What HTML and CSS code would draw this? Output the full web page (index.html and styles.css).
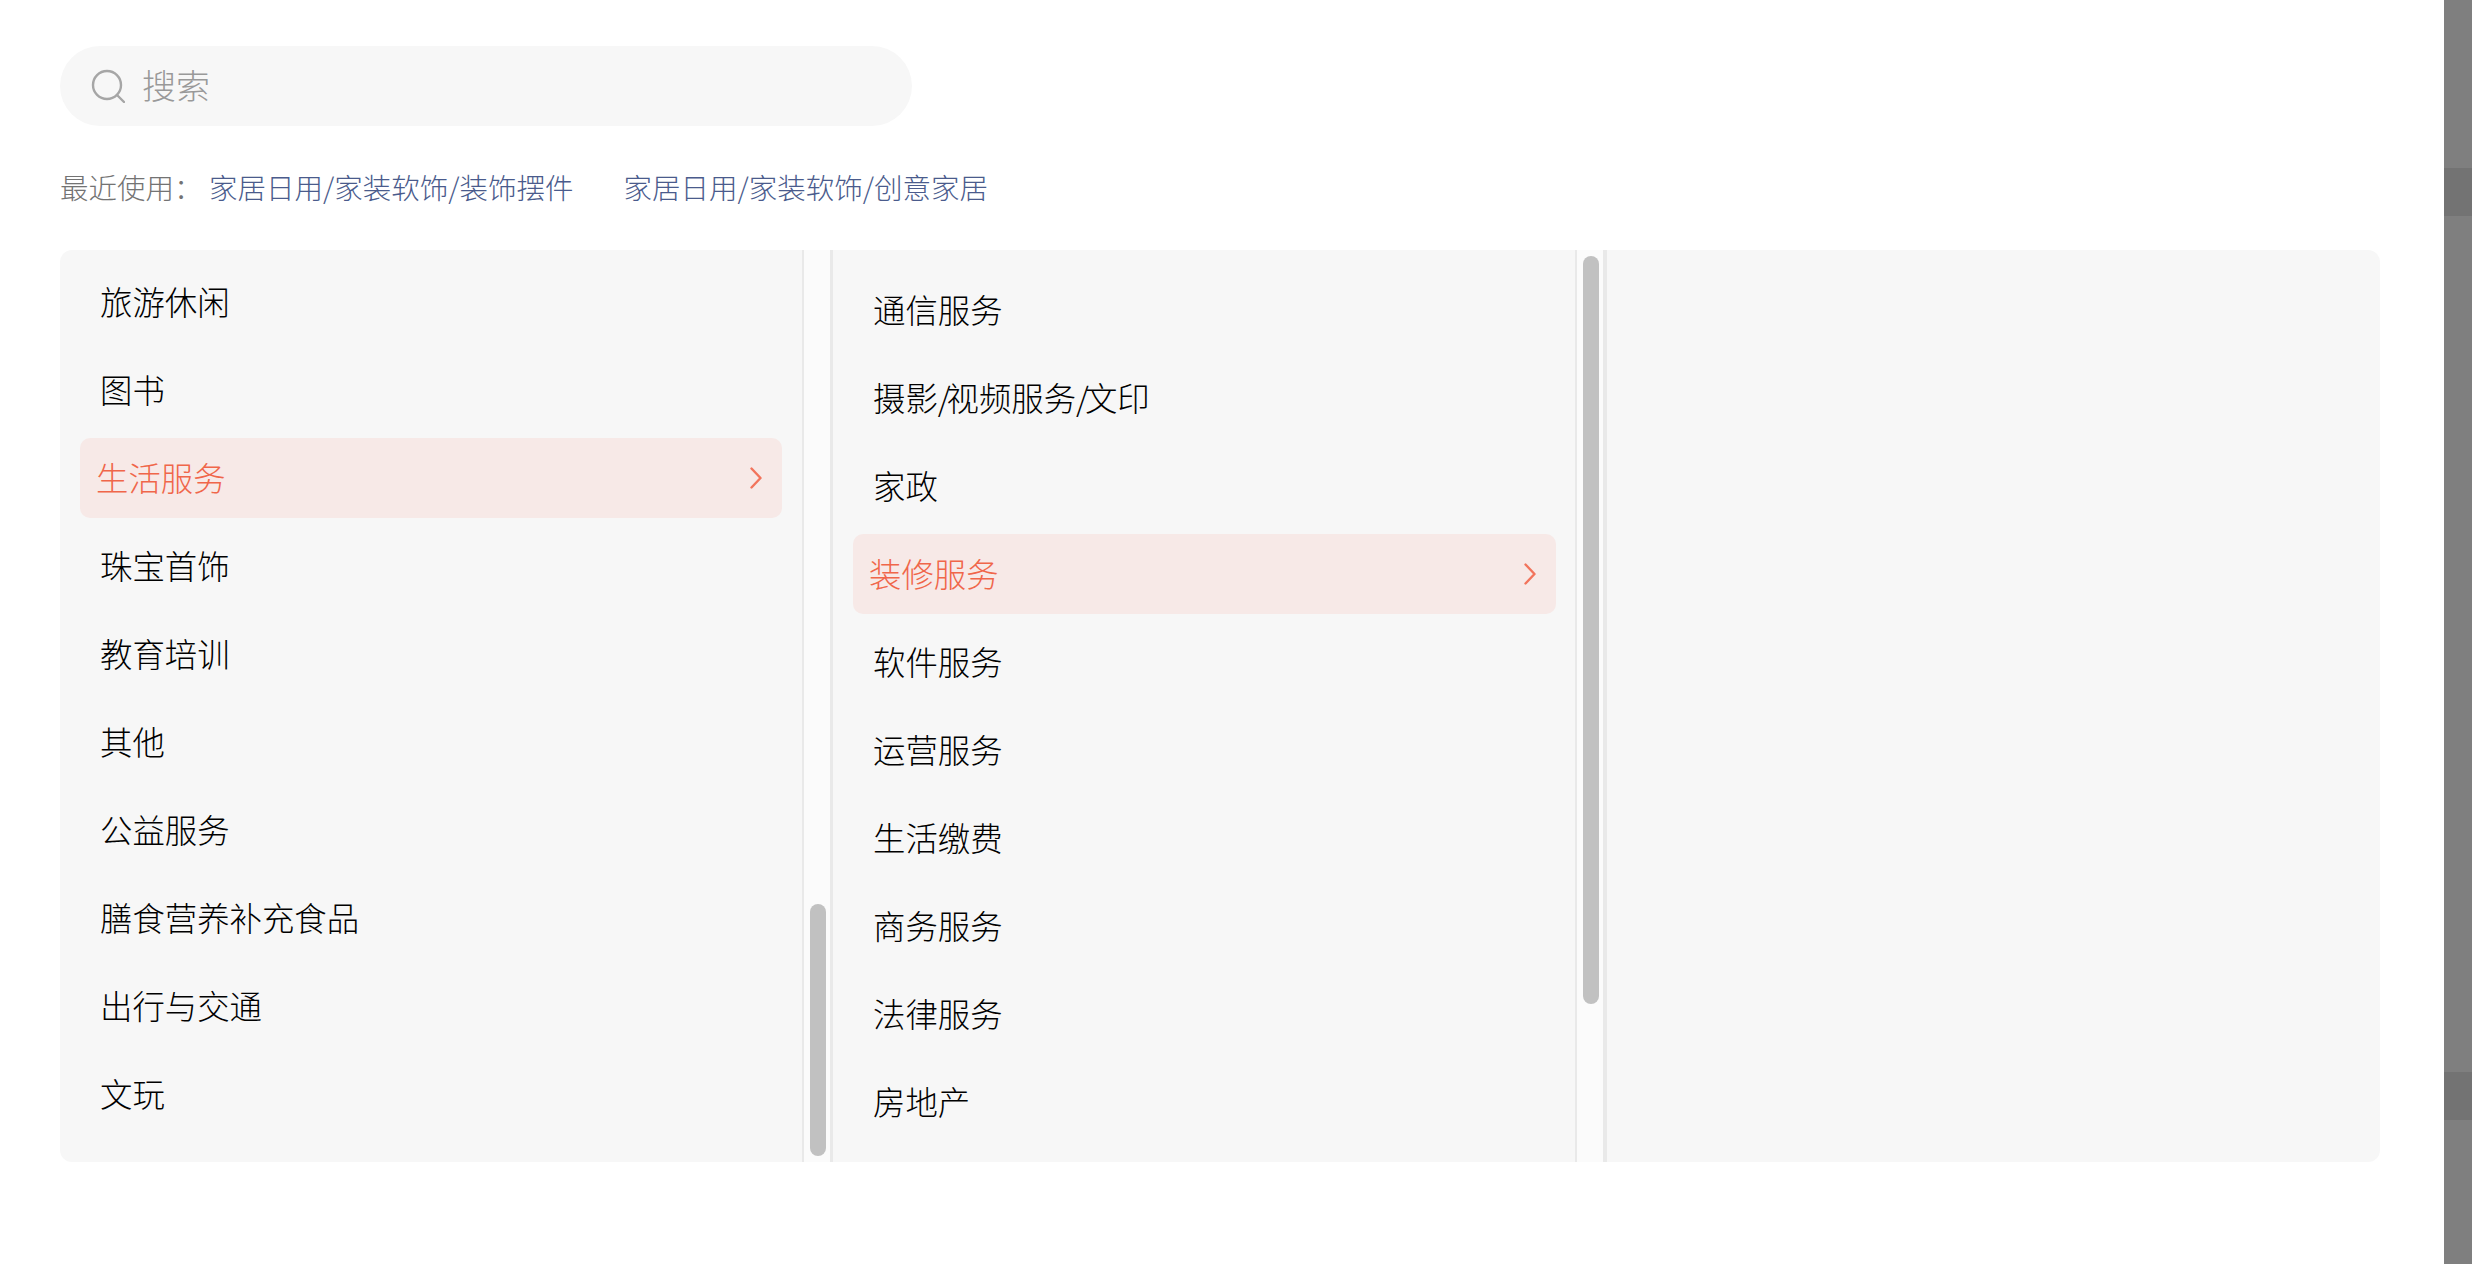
FILE: index.html
```html
<!DOCTYPE html>
<html lang="zh-CN">

<head>
    <meta charset="UTF-8">
    <meta name="viewport" content="width=device-width, initial-scale=1.0">
    <title>类目选择</title>
    <link rel="stylesheet" href="styles.css">
</head>

<body>
    <div class="page">
        <div class="search-box">
            <svg class="search-icon" width="34" height="34" viewBox="0 0 34 34" fill="none">
                <circle cx="16" cy="16" r="14" stroke="#a6a6a6" stroke-width="2.4"></circle>
                <path d="M26 26l7 7" stroke="#a6a6a6" stroke-width="2.4" stroke-linecap="round"></path>
            </svg>
            <span class="search-text">搜索</span>
        </div>

        <div class="recent">
            <span class="recent-label">最近使用：</span>
            <a class="recent-link">家居日用/家装软饰/装饰摆件</a>
            <a class="recent-link">家居日用/家装软饰/创意家居</a>
        </div>

        <div class="panel">
            <div class="column column-first">
                <div class="item">旅游休闲</div>
                <div class="item">图书</div>
                <div class="item item-active">
                    <span>生活服务</span>
                    <svg class="chevron" width="12" height="22" viewBox="0 0 12 22" fill="none">
                        <path d="M1.5 1.5l9 9.5-9 9.5" stroke="#f2745c" stroke-width="2.4" stroke-linecap="round" stroke-linejoin="round"></path>
                    </svg>
                </div>
                <div class="item">珠宝首饰</div>
                <div class="item">教育培训</div>
                <div class="item">其他</div>
                <div class="item">公益服务</div>
                <div class="item">膳食营养补充食品</div>
                <div class="item">出行与交通</div>
                <div class="item">文玩</div>
            </div>
            <div class="track track-end">
                <div class="thumb thumb-first"></div>
            </div>

            <div class="column column-second">
                <div class="item">通信服务</div>
                <div class="item"><span>摄影<span class="slash">/</span>视频服务<span class="slash">/</span>文印</span></div>
                <div class="item">家政</div>
                <div class="item item-active">
                    <span>装修服务</span>
                    <svg class="chevron" width="12" height="22" viewBox="0 0 12 22" fill="none">
                        <path d="M1.5 1.5l9 9.5-9 9.5" stroke="#f2745c" stroke-width="2.4" stroke-linecap="round" stroke-linejoin="round"></path>
                    </svg>
                </div>
                <div class="item">软件服务</div>
                <div class="item">运营服务</div>
                <div class="item">生活缴费</div>
                <div class="item">商务服务</div>
                <div class="item">法律服务</div>
                <div class="item">房地产</div>
            </div>
            <div class="track track-wide">
                <div class="thumb thumb-second"></div>
            </div>

            <div class="column-empty"></div>
        </div>
    </div>

    <div class="side-strip">
        <div class="strip-part strip-top"></div>
        <div class="strip-band"></div>
        <div class="strip-part strip-middle"></div>
        <div class="strip-band"></div>
        <div class="strip-part strip-bottom"></div>
    </div>
</body>

</html>
```

FILE: styles.css
```css
:root {
    --panel: #f7f7f7;
    --line: #e9e9e9;
    --accent: #f0664a;
    --accent-bg: #f7e9e7;
    --text: #000000;
}

* {
    box-sizing: border-box;
}

html,
body {
    height: 100%;
}

body {
    margin: 0;
    background-color: white;
    font-family: "Noto Sans CJK SC", "Noto Sans", sans-serif;
    font-weight: 300;
    color: var(--text);
    display: flex;
    overflow: hidden;
}

.page {
    flex: 1;
    padding: 46px 64px 0 60px;
}

.search-box {
    width: 852px;
    height: 80px;
    border-radius: 40px;
    background-color: var(--panel);
    display: flex;
    align-items: center;
    padding-left: 31px;
}

.search-icon {
    flex: none;
}

.search-text {
    margin: 0 0 3px 17px;
    font-size: 34px;
    color: #999999;
}

.recent {
    height: 40px;
    margin-top: 42px;
    padding-bottom: 3px;
    display: flex;
    align-items: center;
    font-size: 28.5px;
}

.recent-label {
    width: 149px;
    color: #737373;
}

.recent-link {
    color: #4a5b8c;
    margin-right: 50px;
}

.panel {
    height: 912px;
    margin-top: 42px;
    border-radius: 12px;
    background-color: var(--panel);
    display: flex;
    overflow: hidden;
}

.column {
    width: 742px;
    flex: none;
    padding: 0 20px;
    display: flex;
    flex-direction: column;
    gap: 8px;
    overflow: hidden;
}

.column-first {
    padding-top: 12px;
}

.column-second {
    padding: 20px 19px 0 20px;
}

.column-empty {
    flex: 1;
}

.item {
    height: 80px;
    flex: none;
    padding: 0 20px 4px 20px;
    display: flex;
    align-items: center;
    justify-content: space-between;
    font-size: 32.4px;
}

.item-active {
    padding-left: 16px;
    border-radius: 10px;
    background-color: var(--accent-bg);
    color: var(--accent);
}

.slash {
    letter-spacing: -4px;
}

.chevron {
    margin-top: 4px;
}

.track {
    width: 31px;
    flex: none;
    padding: 0 6px;
    background-color: #fbfbfb;
    border-left: 2px solid var(--line);
    border-right: 3px solid var(--line);
    display: flex;
    flex-direction: column;
}

.track-wide {
    width: 32px;
    border-right-width: 4px;
}

.thumb {
    width: 16px;
    border-radius: 8px;
    background-color: #c1c1c1;
}

.thumb-first {
    height: 252px;
    margin-top: auto;
    margin-bottom: 6px;
}

.thumb-second {
    height: 748px;
    margin-top: 6px;
}

.side-strip {
    width: 28px;
    flex: none;
    display: flex;
    flex-direction: column;
}

.strip-part {
    background-color: #7f7f7f;
}

.strip-top {
    height: 168px;
}

.strip-band {
    height: 48px;
    background-color: #737373;
}

.strip-middle {
    height: 856px;
}

.strip-bottom {
    flex: 1;
}
```
